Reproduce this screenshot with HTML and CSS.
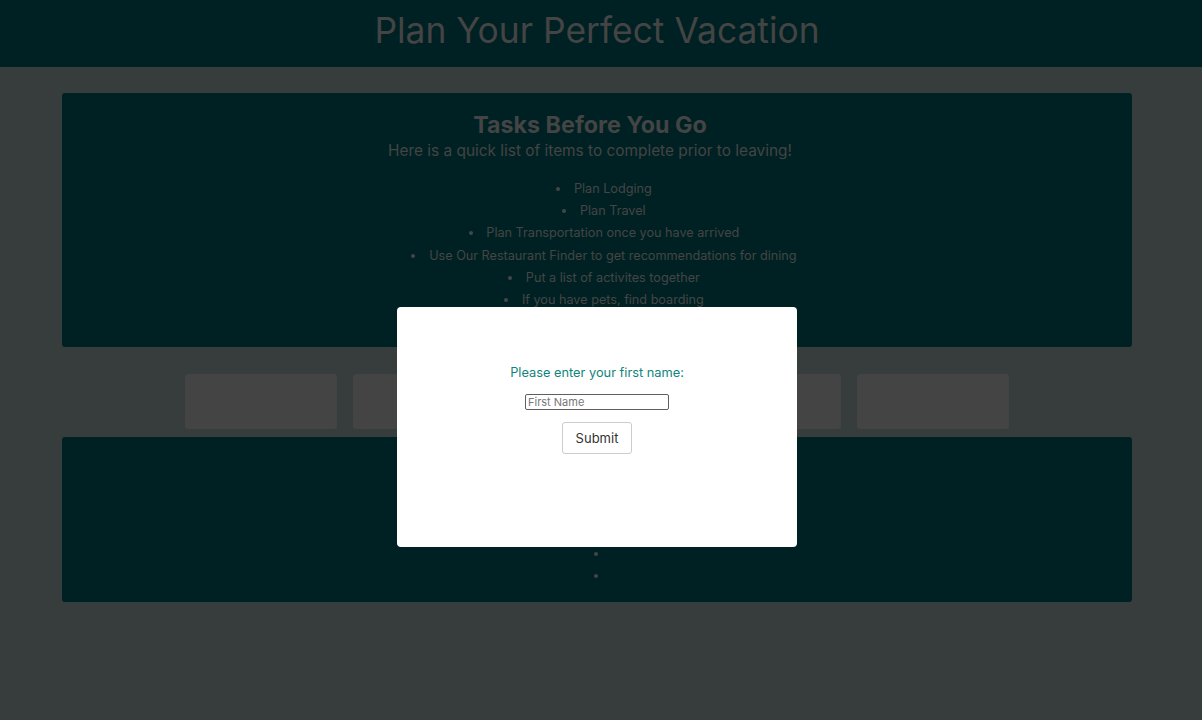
FILE: index.html
```html
<!DOCTYPE html>
<html lang="en">
<head>
<meta charset="utf-8">
<title>Plan Your Perfect Vacation</title>
<link rel="stylesheet" href="styles.css">
</head>
<body>
<header class="site-header">
  <h1 class="site-title">Plan Your Perfect Vacation</h1>
</header>
<main class="content">
  <section class="card tasks">
    <h2 class="card-title">Tasks Before You Go</h2>
    <p class="card-sub">Here is a quick list of items to complete prior to leaving!</p>
    <ul class="task-list">
      <li>Plan Lodging</li>
      <li>Plan Travel</li>
      <li>Plan Transportation once you have arrived</li>
      <li>Use Our Restaurant Finder to get recommendations for dining</li>
      <li>Put a list of activites together</li>
      <li>If you have pets, find boarding</li>
      <li>Pack your bags</li>
    </ul>
  </section>
  <nav class="btn-row">
    <button class="tile"></button>
    <button class="tile"></button>
    <button class="tile"></button>
    <button class="tile"></button>
    <button class="tile"></button>
  </nav>
  <section class="card results">
    <ul class="task-list empty-list">
      <li></li>
      <li></li>
      <li></li>
      <li></li>
      <li></li>
      <li></li>
    </ul>
  </section>
</main>
<div class="modal">
  <label class="modal-label" for="fname">Please enter your first name:</label>
  <input class="modal-input" id="fname" type="text" placeholder="First Name">
  <button class="modal-btn">Submit</button>
</div>
</body>
</html>
```
FILE: styles.css
```css
html, body {
  margin: 0;
  padding: 0;
}
body {
  background: #373d3c;
  font-family: Inter, "Noto Sans", sans-serif;
  height: 720px;
  overflow: hidden;
}
.site-header {
  background: #002123;
  height: 67px;
  display: flex;
  justify-content: center;
  padding-right: 8px;
}
.site-title {
  margin: 0;
  font-weight: 400;
  font-size: 35.4px;
  line-height: 62px;
  color: #444;
}
.content {
  margin-left: 62px;
  width: 1070px;
  padding-top: 26px;
}
.card {
  background: #002123;
  border-radius: 3px;
  text-align: center;
  color: #3f4443;
}
.tasks {
  height: 254px;
  padding-top: 21px;
  box-sizing: border-box;
}
.card-title {
  margin: 0;
  padding-right: 14px;
  font-size: 23.3px;
  font-weight: 700;
  line-height: 22px;
  color: #444;
}
.card-sub {
  margin: 4px 0 0;
  padding-right: 14px;
  font-size: 15.4px;
  line-height: 22px;
  color: #444;
}
.task-list {
  list-style: disc inside;
  margin: 16px 0 0;
  padding: 0 0 0 14px;
  font-size: 12.65px;
  line-height: 22.2px;
  color: #454545;
}
.task-list li::marker {
  color: #454545;
}
.btn-row {
  display: flex;
  justify-content: center;
  gap: 16px;
  margin: 27px 0 8px;
}
.tile {
  appearance: none;
  -webkit-appearance: none;
  width: 152px;
  height: 55px;
  border: none;
  border-radius: 3px;
  background: #444444;
  padding: 0;
}
.results {
  height: 165px;
  padding-top: 17px;
  box-sizing: border-box;
}
.empty-list {
  margin: 0;
  padding-left: 12px;
}
.modal {
  position: fixed;
  left: 397px;
  top: 307px;
  width: 400px;
  height: 240px;
  box-sizing: border-box;
  background: #fff;
  border-radius: 4px;
  display: flex;
  flex-direction: column;
  align-items: center;
  padding-top: 58px;
}
.modal-label {
  font-size: 12.8px;
  line-height: 16px;
  color: #0f857c;
}
.modal-input {
  margin-top: 13px;
  width: 144px;
  height: 16px;
  box-sizing: border-box;
  border: 1px solid #5f5f5f;
  border-radius: 2px;
  font-family: Inter, "Noto Sans", sans-serif;
  font-size: 11px;
  padding: 0 2px;
  color: #333;
}
.modal-input::placeholder {
  color: #777;
}
.modal-btn {
  margin-top: 12px;
  width: 70px;
  height: 32px;
  background: #fff;
  border: 1px solid #ccc;
  border-radius: 3px;
  font-family: Inter, "Noto Sans", sans-serif;
  font-size: 13px;
  color: #333;
  padding: 0;
}
```
